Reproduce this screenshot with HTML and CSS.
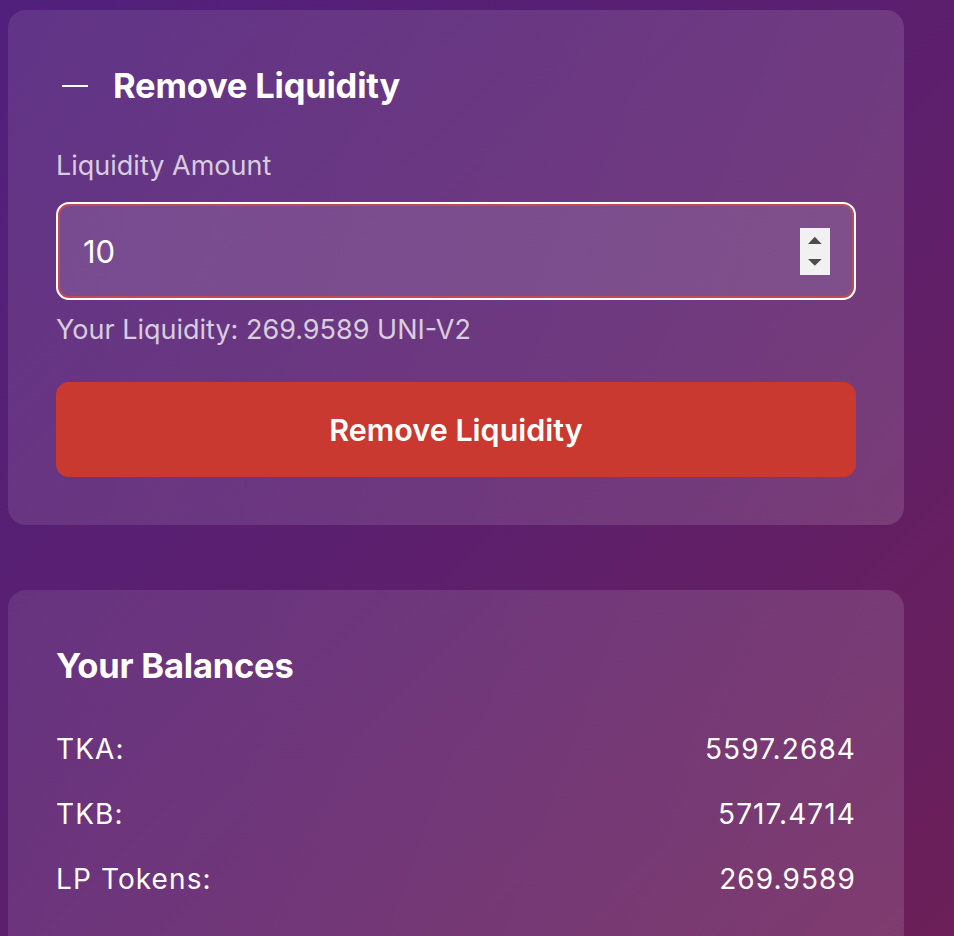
FILE: index.html
```html
<!DOCTYPE html>
<html>
<head>
<meta charset="utf-8">
<link rel="stylesheet" href="styles.css">
</head>
<body>
<main class="page">
  <section class="card">
    <h2 class="card-title"><span class="minus"></span>Remove Liquidity</h2>
    <label class="field-label">Liquidity Amount</label>
    <div class="amount-input">
      <span class="amount-value">10</span>
      <span class="spinner">
        <svg width="30" height="47" viewBox="0 0 30 47"><path d="M8 16 L14.8 8.7 L21.7 16 Z" fill="#4d4d4d"/><path d="M8 31 L14.8 37.7 L21.7 31 Z" fill="#4d4d4d"/></svg>
      </span>
    </div>
    <p class="helper">Your Liquidity: 269.9589 UNI-V2</p>
    <button class="btn-remove">Remove Liquidity</button>
  </section>

  <section class="card balances">
    <h2 class="card-title">Your Balances</h2>
    <div class="row"><span>TKA:</span><span>5597.2684</span></div>
    <div class="row"><span>TKB:</span><span>5717.4714</span></div>
    <div class="row"><span>LP Tokens:</span><span>269.9589</span></div>
  </section>
</main>
</body>
</html>
```
FILE: styles.css
```css
html, body {
  margin: 0;
  height: 100%;
}
body {
  background: linear-gradient(135deg, #51207c 0%, #5c1f6e 50%, #6c1f58 100%);
  font-family: Inter, "Noto Sans", sans-serif;
  color: #fff;
  overflow: hidden;
}
.page {
  padding: 10px 50px 0 8px;
  display: flex;
  flex-direction: column;
  gap: 65px;
}
.card {
  background: linear-gradient(110deg, rgba(255,255,255,0.09), rgba(255,255,255,0.13));
  border-radius: 18px;
  padding: 53px 48px 48px;
  display: flex;
  flex-direction: column;
}
.card-title {
  margin: 0;
  font-size: 34.5px;
  font-weight: 700;
  line-height: 46px;
  display: flex;
  align-items: center;
  letter-spacing: -0.2px;
}
.minus {
  display: inline-block;
  width: 26px;
  height: 2.5px;
  background: #fff;
  margin: 0 25px 0 6px;
}
.field-label {
  margin-top: 40px;
  font-size: 27px;
  line-height: 34px;
  color: rgba(255,255,255,0.75);
}
.amount-input {
  margin-top: 19px;
  height: 98px;
  box-sizing: border-box;
  border: 2px solid #fff;
  border-radius: 13px;
  box-shadow: inset 0 0 0 2px #c24a55;
  background: linear-gradient(110deg, #784b91, #7f4f8a);
  display: flex;
  align-items: center;
  justify-content: space-between;
  padding: 0 24px 0 25px;
}
.amount-value {
  font-size: 31px;
  color: #fff;
}
.spinner {
  width: 30px;
  height: 47px;
  background: #f1f1f1;
  display: block;
}
.spinner svg { display: block; }
.helper {
  margin: 13px 0 0;
  font-size: 27px;
  line-height: 34px;
  color: rgba(255,255,255,0.75);
}
.btn-remove {
  margin-top: 35px;
  height: 95px;
  border: none;
  border-radius: 13px;
  background: #c9392f;
  color: #fff;
  font-family: Inter, "Noto Sans", sans-serif;
  font-size: 30.5px;
  font-weight: 600;
}
.balances .card-title {
  margin-bottom: 28px;
}
.row {
  display: flex;
  justify-content: space-between;
  font-size: 28px;
  letter-spacing: 1.1px;
  line-height: 65px;
}
```
